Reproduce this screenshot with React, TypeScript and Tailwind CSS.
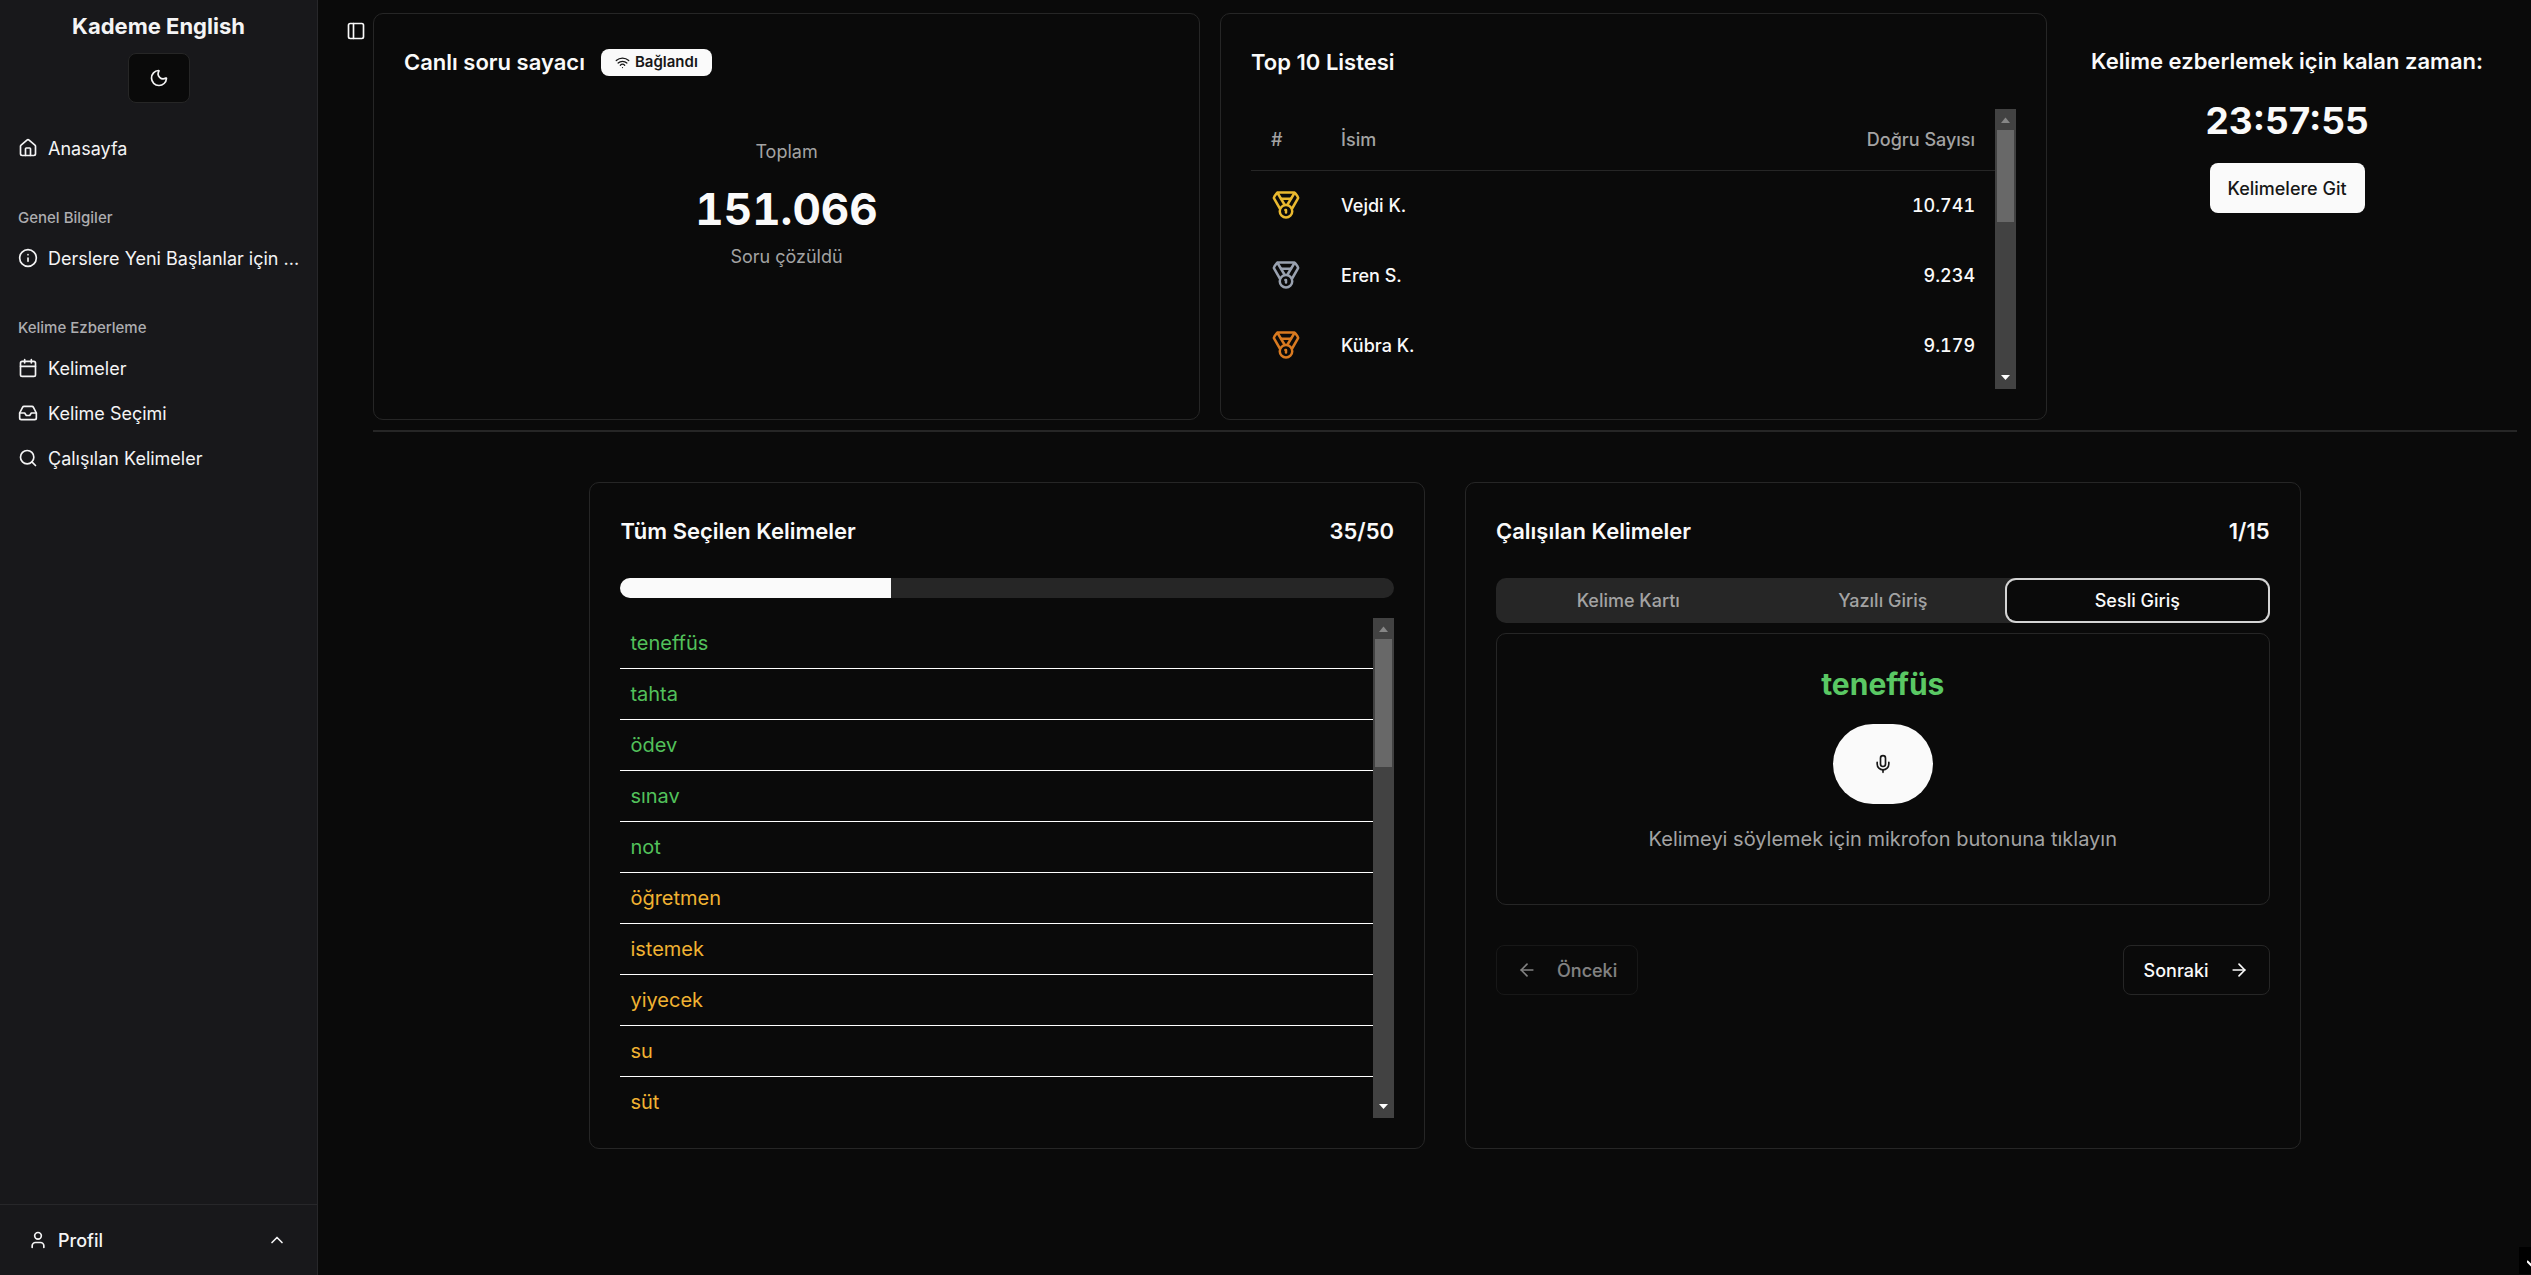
import React from 'react';
import {
  ArrowLeft,
  ArrowRight,
  Calendar,
  ChevronUp,
  House,
  Inbox,
  Info,
  Medal,
  Mic,
  Moon,
  PanelLeft,
  Search,
  User,
  Wifi,
} from 'lucide-react';
import type { LucideIcon } from 'lucide-react';

interface NavItem {
  title: string;
  icon: LucideIcon;
}

const navGroups: { label?: string; items: NavItem[] }[] = [
  { items: [{ title: 'Anasayfa', icon: House }] },
  { label: 'Genel Bilgiler', items: [{ title: 'Derslere Yeni Başlanlar için ...', icon: Info }] },
  {
    label: 'Kelime Ezberleme',
    items: [
      { title: 'Kelimeler', icon: Calendar },
      { title: 'Kelime Seçimi', icon: Inbox },
      { title: 'Çalışılan Kelimeler', icon: Search },
    ],
  },
];

const leaders = [
  { name: 'Vejdi K.', score: '10.741', color: 'text-[#eab92f]' },
  { name: 'Eren S.', score: '9.234', color: 'text-gray-400' },
  { name: 'Kübra K.', score: '9.179', color: 'text-[#d97a20]' },
];

const words = [
  { text: 'teneffüs', learned: true },
  { text: 'tahta', learned: true },
  { text: 'ödev', learned: true },
  { text: 'sınav', learned: true },
  { text: 'not', learned: true },
  { text: 'öğretmen', learned: false },
  { text: 'istemek', learned: false },
  { text: 'yiyecek', learned: false },
  { text: 'su', learned: false },
  { text: 'süt', learned: false },
];

const tabs = ['Kelime Kartı', 'Yazılı Giriş', 'Sesli Giriş'];

/* Classic scrollbar track with arrows, thumb height is set by the caller */
const ScrollTrack: React.FC<{ thumb: string }> = ({ thumb }) => (
  <div className="flex w-[21px] shrink-0 flex-col items-center justify-between bg-[#424242]" aria-hidden="true">
    <div className="flex flex-col items-center">
      <svg className="h-[21px] w-[21px] text-[#868686]" viewBox="0 0 21 21" fill="currentColor">
        <path d="M10.5 8.5 15 14H6z" />
      </svg>
      <div className={`w-[17px] bg-[#686868] ${thumb}`} />
    </div>
    <svg className="h-[21px] w-[21px] text-white" viewBox="0 0 21 21" fill="currentColor">
      <path d="M10.5 12 15 7H6z" />
    </svg>
  </div>
);

const Sidebar: React.FC = () => (
  <aside className="flex w-[318px] shrink-0 flex-col border-r border-[#27272a] bg-[#18181b] text-[#f4f4f5]">
    <div className="flex flex-col items-center gap-[10px] p-[10px]">
      <span className="text-[22px] leading-[33px] font-bold">Kademe English</span>
      <button
        aria-label="Tema"
        className="flex h-[50px] w-[62px] items-center justify-center rounded-lg border border-[#262626] bg-[#0a0a0a]"
      >
        <Moon size={20} />
      </button>
    </div>

    <nav className="flex flex-1 flex-col gap-[10px] pt-[5px]">
      {navGroups.map((group, i) => (
        <div key={i} className="p-[10px]">
          {group.label && (
            <div className="flex h-10 items-center px-2 text-[15px] font-medium text-[#adadb0]">{group.label}</div>
          )}
          <ul className="flex flex-col gap-[5px]">
            {group.items.map(({ title, icon: Icon }) => (
              <li key={title}>
                <a href="#" className="flex h-10 items-center gap-[10px] px-2 text-[18px] whitespace-nowrap">
                  <Icon size={20} className="shrink-0" />
                  {title}
                </a>
              </li>
            ))}
          </ul>
        </div>
      ))}
    </nav>

    <div className="border-t border-[#27272a] p-[10px]">
      <button className="flex h-[50px] w-full items-center gap-[10px] pr-5 pl-[18px] text-[18px] font-medium">
        <User size={20} />
        Profil
        <ChevronUp size={20} className="ml-auto" />
      </button>
    </div>
  </aside>
);

const CounterCard: React.FC = () => (
  <section className="flex-1 rounded-[10px] border border-[#262626] p-[30px]">
    <div className="flex items-center gap-4">
      <h2 className="text-[22px] leading-[37px] font-semibold">Canlı soru sayacı</h2>
      <span className="flex h-[27px] items-center gap-[5px] rounded-lg bg-[#fafafa] px-[14px] text-[15px] font-semibold text-[#171717]">
        <Wifi size={15} />
        Bağlandı
      </span>
    </div>
    <div className="mt-[58px] flex flex-col items-center text-center">
      <p className="text-[18px] leading-[25px] text-[#a3a3a3]">Toplam</p>
      <p className="mt-5 text-[44px] leading-[50px] font-bold tabular-nums">151.066</p>
      <p className="mt-[10px] text-[18px] leading-[25px] text-[#a3a3a3]">Soru çözüldü</p>
    </div>
  </section>
);

const LeaderCard: React.FC = () => (
  <section className="flex-1 rounded-[10px] border border-[#262626] p-[30px]">
    <h2 className="text-[22px] leading-[37px] font-semibold">Top 10 Listesi</h2>
    <div className="mt-7 flex h-[280px] overflow-hidden">
      <table className="w-full self-start text-[18px]">
        <thead>
          <tr className="h-[61px] border-b border-[#262626] text-[#a3a3a3]">
            <th className="w-[70px] px-5 text-left font-medium">#</th>
            <th className="px-5 text-left font-medium">İsim</th>
            <th className="px-5 text-right font-medium">Doğru Sayısı</th>
          </tr>
        </thead>
        <tbody>
          {leaders.map((row) => (
            <tr key={row.name} className="h-[70px] font-medium">
              <td className="px-5">
                <Medal size={30} className={row.color} />
              </td>
              <td className="px-5">{row.name}</td>
              <td className="px-5 text-right tabular-nums">{row.score}</td>
            </tr>
          ))}
        </tbody>
      </table>
      <ScrollTrack thumb="h-[92px]" />
    </div>
  </section>
);

const TimerPanel: React.FC = () => (
  <section className="flex shrink-0 flex-col items-center px-6 pt-[30px]">
    <h2 className="text-[22px] leading-[37px] font-semibold">Kelime ezberlemek için kalan zaman:</h2>
    <p className="mt-[18px] text-[37px] leading-[45px] font-bold">23:57:55</p>
    <button className="mt-5 h-[50px] rounded-lg bg-[#fafafa] px-[18px] text-[18px] font-medium text-[#171717]">
      Kelimelere Git
    </button>
  </section>
);

const SelectedWordsCard: React.FC = () => (
  <section className="flex-1 rounded-[10px] border border-[#262626] p-[30px]">
    <div className="flex justify-between text-[22px] leading-[37px] font-semibold">
      <h2>Tüm Seçilen Kelimeler</h2>
      <span>35/50</span>
    </div>
    <div
      role="progressbar"
      aria-valuenow={35}
      aria-label="İlerleme"
      className="mt-7 h-5 overflow-hidden rounded-full bg-[#262626]"
    >
      <div className="h-full w-[35%] bg-[#fafafa]" />
    </div>
    <div className="mt-5 flex h-[500px] overflow-hidden">
      <ul className="flex-1">
        {words.map((word) => (
          <li
            key={word.text}
            className={`border-b border-white px-[10px] text-[20px] leading-[50px] ${
              word.learned ? 'text-[#52c15b]' : 'text-[#f0b232]'
            }`}
          >
            {word.text}
          </li>
        ))}
      </ul>
      <ScrollTrack thumb="h-[128px]" />
    </div>
  </section>
);

const PracticeCard: React.FC = () => (
  <section className="flex-1 rounded-[10px] border border-[#262626] p-[30px]">
    <div className="flex justify-between text-[22px] leading-[37px] font-semibold">
      <h2>Çalışılan Kelimeler</h2>
      <span>1/15</span>
    </div>

    <div role="tablist" className="mt-7 grid h-[45px] grid-cols-3 rounded-[10px] bg-[#262626] p-[5px]">
      {tabs.map((tab) => (
        <button
          key={tab}
          role="tab"
          aria-selected={tab === 'Sesli Giriş'}
          className={`rounded-md text-[18px] font-medium ${
            tab === 'Sesli Giriş'
              ? 'bg-[#0a0a0a] text-[#fafafa] ring-2 ring-[#d4d4d4] ring-offset-3 ring-offset-[#0a0a0a]'
              : 'text-[#a3a3a3]'
          }`}
        >
          {tab}
        </button>
      ))}
    </div>

    <div className="mt-[10px] flex h-[272px] flex-col items-center rounded-[10px] border border-[#262626] pt-[30px]">
      <p className="text-[30px] leading-10 font-bold text-[#5ac864]">teneffüs</p>
      <button
        aria-label="Mikrofon"
        className="mt-5 flex h-20 w-[100px] items-center justify-center rounded-full bg-[#fafafa] text-[#171717]"
      >
        <Mic size={20} />
      </button>
      <p className="mt-5 text-[20px] leading-[30px] text-[#a3a3a3]">
        Kelimeyi söylemek için mikrofon butonuna tıklayın
      </p>
    </div>

    <div className="mt-10 flex justify-between text-[18px] font-medium">
      <button
        disabled
        className="flex h-[50px] items-center gap-5 rounded-lg border border-[#262626] px-5 opacity-50"
      >
        <ArrowLeft size={20} />
        Önceki
      </button>
      <button className="flex h-[50px] items-center gap-5 rounded-lg border border-[#262626] px-5">
        Sonraki
        <ArrowRight size={20} />
      </button>
    </div>
  </section>
);

export default function App() {
  return (
    <div className="relative flex min-h-screen overflow-hidden bg-[#0a0a0a] font-['Inter',sans-serif] text-[#fafafa]">
      <Sidebar />

      <main className="flex flex-1 items-start pt-[13px] pr-[14px] pl-5">
        <button aria-label="Menü" className="flex h-[35px] w-[35px] shrink-0 items-center justify-center">
          <PanelLeft size={20} />
        </button>

        <div className="flex-1">
          <div className="flex gap-5 pr-[10px]">
            <CounterCard />
            <LeaderCard />
            <TimerPanel />
          </div>

          <hr className="mt-[10px] border-t-2 border-[#262626]" />

          <div className="mx-auto mt-[50px] flex w-4/5 gap-10 px-0.5">
            <SelectedWordsCard />
            <PracticeCard />
          </div>
        </div>
      </main>

      {/* Widget tucked into the bottom corner of the window */}
      <div className="absolute right-0 bottom-px h-[27px] w-3 overflow-hidden bg-black">
        <svg className="absolute bottom-1.5 left-2 h-2 w-3 text-white" viewBox="0 0 12 8" fill="none" stroke="currentColor" strokeWidth="2">
          <path d="M0 1l5 5 5-5" />
        </svg>
      </div>
    </div>
  );
}
